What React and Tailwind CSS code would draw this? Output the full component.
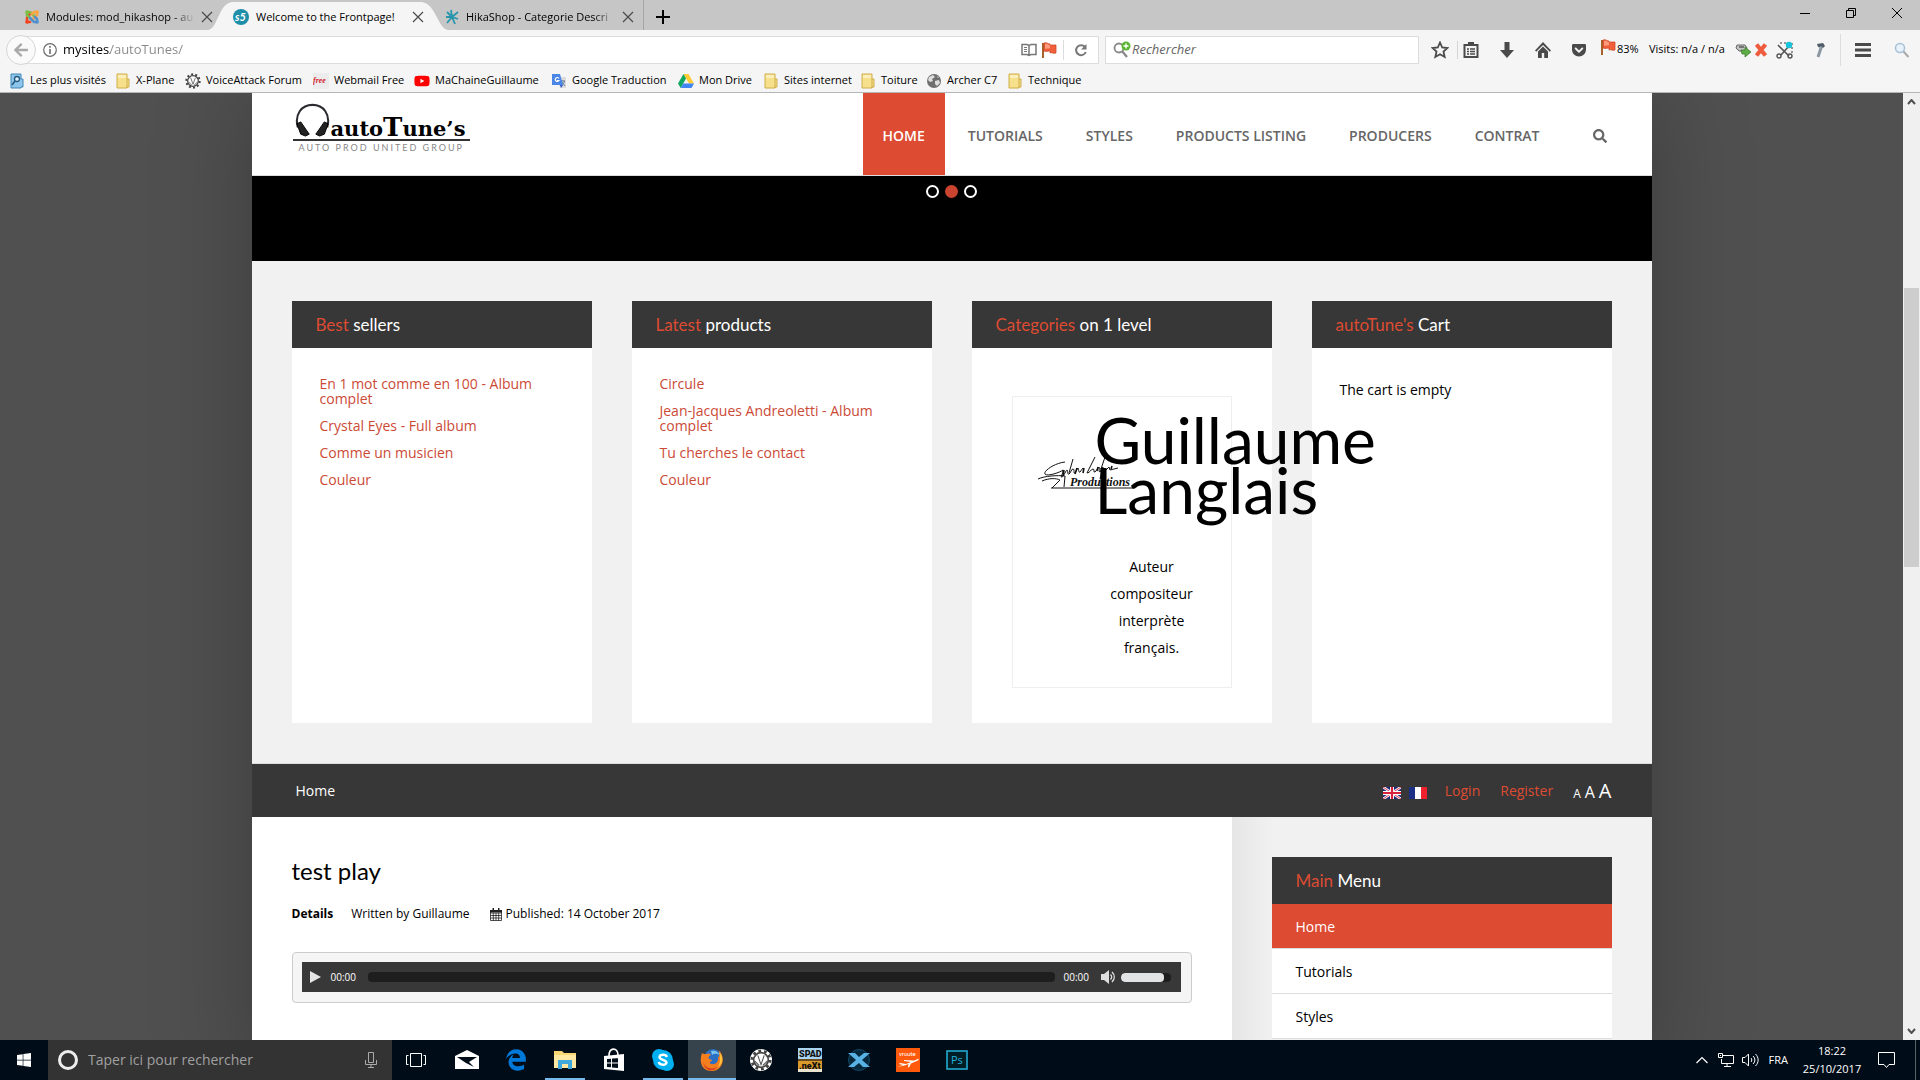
import React, { useState } from "react";
import { FaArrowLeft, FaEdgeLegacy, FaGetPocket, FaSearch, FaWindows, FaYoutube } from "react-icons/fa";

const folderIcon = (
  <svg viewBox="0 0 16 16" className="h-4 w-4">
    <path d="M2 1h10v5h2v8h-2v1H2z" fill="#f6e08b" stroke="#cfae4a" />
    <path d="M12 6v9" stroke="#cfae4a" />
    <path d="M3 2h8v3H3z" fill="#fbf0bd" />
  </svg>
);

const gearIcon = (
  <svg viewBox="0 0 24 24" className="h-full w-full">
    <circle cx="12" cy="12" r="10" fill="none" stroke="#444" strokeWidth="3" strokeDasharray="3 3.28" />
    <circle cx="12" cy="12" r="8" fill="#fff" stroke="#444" strokeWidth="1.800" />
    <path d="M8.500 7l3.500 10L15.500 7M5 13l5 5M19 13l-5 5" fill="none" stroke="#555" strokeWidth="1.200" />
  </svg>
);

function RedFlag() {
  return (
    <svg viewBox="0 0 16 16" className="h-4 w-4 shrink-0">
      <path d="M2 1v15" stroke="#a5622d" strokeWidth="2" />
      <path d="M3 1c3-1 4 1 6 1v1h6v8c-3 1-4-1-6 0V9c-2 0-4 1-6 0z" fill="#f0603c" stroke="#c9401f" strokeWidth=".7" />
      <path d="M4 2c2-1 3 1 5 1v3c-2 1-3 0-5 1z" fill="#ff9b7c" />
    </svg>
  );
}

const bookmarks = [
  {
    label: "Les plus visités",
    width: "w-[106px]",
    icon: (
      <svg viewBox="0 0 16 16" className="h-4 w-4">
        <path d="M2 1h10v5h2v8h-2v1H2z" fill="#8ec5ea" stroke="#3f87b8" />
        <circle cx="8" cy="6" r="2.5" fill="#d9effc" stroke="#24577d" strokeWidth="1.3" />
        <path d="M6 8l-3 4" stroke="#24577d" strokeWidth="1.6" />
      </svg>
    ),
  },
  { label: "X-Plane", width: "w-[70px]", icon: folderIcon },
  { label: "VoiceAttack Forum", width: "w-[128px]", icon: gearIcon },
  {
    label: "Webmail Free",
    width: "w-[101px]",
    icon: (
      <svg viewBox="0 0 16 16" className="h-4 w-4">
        <path d="M0 0h16v16H0z" fill="#ececec" />
        <text x="0" y="10" fontSize="8" fontStyle="italic" fontWeight="bold" fontFamily="Liberation Serif, serif" fill="#d3232e">free</text>
      </svg>
    ),
  },
  { label: "MaChaineGuillaume", width: "w-[137px]", icon: <FaYoutube className="h-4 w-4 text-[#f00]" /> },
  {
    label: "Google Traduction",
    width: "w-[127px]",
    icon: (
      <svg viewBox="0 0 16 16" className="h-4 w-4">
        <path d="M6 4h9v11H9z" fill="#dcdcdc" />
        <path d="M10 8h4M12 7v1M13.500 8c0 2-2 4-3 4M11 9l3 4" stroke="#6b7f93" fill="none" />
        <path d="M1 1h8l3 11H1z" fill="#4a86e8" />
        <path d="M8 5.500a2 2 0 1 0 0 2H6" fill="none" stroke="#fff" strokeWidth="1.200" />
        <path d="M9 12h3l-2 3z" fill="#2a56c6" />
      </svg>
    ),
  },
  {
    label: "Mon Drive",
    width: "w-[85px]",
    icon: (
      <svg viewBox="0 0 16 16" className="h-4 w-4">
        <path d="M5.500 1h5L16 10.500h-5z" fill="#fc3" />
        <path d="M5.500 1L8 5.500 2.700 15 0 10.500z" fill="#11a861" />
        <path d="M5.200 10.500H16L13.500 15H2.700z" fill="#4285f4" />
      </svg>
    ),
  },
  { label: "Sites internet", width: "w-[97px]", icon: folderIcon },
  { label: "Toiture", width: "w-[66px]", icon: folderIcon },
  {
    label: "Archer C7",
    width: "w-[81px]",
    icon: (
      <svg viewBox="0 0 16 16" className="h-4 w-4">
        <circle cx="8" cy="8" r="7" fill="#6f6f6f" />
        <path d="M3 4l4-2 2 2-3 2 1 2-3 1-2-2zM9 8l4-1 1 3-3 3-2-2zM11 3l2 1-1 1z" fill="#dedede" />
      </svg>
    ),
  },
  { label: "Technique", width: "w-[80px]", icon: folderIcon },
];

const nav = ["Home", "Tutorials", "Styles", "Products Listing", "Producers", "Contrat"];

function CloseX() {
  return (
    <svg viewBox="0 0 12 12" className="h-3 w-3">
      <path d="M1 1l10 10M11 1L1 11" stroke="#4a4a4a" strokeWidth="1.2" />
    </svg>
  );
}

function TabBar() {
  return (
    <div className="flex h-[30px] shrink-0 items-stretch bg-[#c6c6c6] text-[11px] text-black">
      <div className="flex w-[213px] items-center pt-1 pl-6">
        <svg viewBox="0 0 16 16" className="mr-[6px] h-4 w-4 shrink-0">
          <g fill="none" strokeWidth="2.600" strokeLinecap="round">
            <path d="M3 13V9c0-1 1-2 2-3l2-2M3 13h3" stroke="#f44321" />
            <path d="M3 3h2c2 0 3 2 5 4M3 3v3l3 3" stroke="#7ac143" />
            <path d="M13 3v3l-5 5M13 3h-3L8 5" stroke="#f9a541" />
            <path d="M13 13h-3l-4-4M13 13v-3l-2-2" stroke="#5091cd" />
          </g>
          <g fill="none" strokeWidth="3.600" strokeLinecap="round">
            <path d="M3 3h.1" stroke="#7ac143" />
            <path d="M13 3h.1" stroke="#f9a541" />
            <path d="M13 13h.1" stroke="#5091cd" />
            <path d="M3 13h.1" stroke="#f44321" />
          </g>
        </svg>
        <span className="w-[150px] whitespace-nowrap [mask-image:linear-gradient(to_right,#000_85%,transparent)]">
          Modules: mod_hikashop - au
        </span>
        <button aria-label="Close tab" className="ml-[6px]"><CloseX /></button>
      </div>
      <div className="relative flex w-[227px] items-center pt-1 pl-5">
        <svg viewBox="0 0 240 28" preserveAspectRatio="none" className="absolute bottom-0 -left-[5px] h-7 w-[240px]">
          <path d="M0 28C10 27 10 2 24 0H214C228 2 230 27 240 28z" fill="#f5f5f5" />
        </svg>
        <svg viewBox="0 0 16 16" className="relative mr-[7px] h-4 w-4 shrink-0">
          <circle cx="8" cy="8" r="8" fill="#1f8ea8" />
          <text x="2" y="12" fontSize="11" fontWeight="bold" fontStyle="italic" fontFamily="Lato, sans-serif" fill="#fff">s5</text>
        </svg>
        <span className="relative w-[150px] whitespace-nowrap">Welcome to the Frontpage!</span>
        <button aria-label="Close tab" className="relative ml-[6px]"><CloseX /></button>
      </div>
      <div className="flex w-[204px] items-center border-r border-[#a5a5a5] pt-1 pl-1">
        <svg viewBox="0 0 16 16" className="mr-[6px] h-4 w-4 shrink-0">
          <path d="M8 8L7 1M8 8l6-5M8 8H2M8 8l6 2M8 8l3 7M8 8l-5 6M8 8L3 3" stroke="#2796ad" strokeWidth="1.800" />
        </svg>
        <span className="w-[150px] whitespace-nowrap [mask-image:linear-gradient(to_right,#000_85%,transparent)]">
          HikaShop - Categorie Descri
        </span>
        <button aria-label="Close tab" className="ml-[6px]"><CloseX /></button>
      </div>
      <button aria-label="New tab" className="ml-3 pt-1">
        <svg viewBox="0 0 14 14" className="h-[14px] w-[14px]">
          <path d="M7 0v14M0 7h14" stroke="#000" strokeWidth="2" />
        </svg>
      </button>
      <div className="ml-auto flex items-center gap-9 pr-[18px] pb-1">
        <button aria-label="Minimize">
          <svg viewBox="0 0 10 10" className="h-[10px] w-[10px]"><path d="M0 5.500h10" stroke="#000" /></svg>
        </button>
        <button aria-label="Restore">
          <svg viewBox="0 0 10 10" className="h-[10px] w-[10px]">
            <path d="M.5 2.500h7v7h-7zM2.500 2.500v-2h7v7h-2" fill="none" stroke="#000" />
          </svg>
        </button>
        <button aria-label="Close">
          <svg viewBox="0 0 10 10" className="h-[10px] w-[10px]"><path d="M0 0l10 10M10 0L0 10" stroke="#000" /></svg>
        </button>
      </div>
    </div>
  );
}

function AddressBar() {
  return (
    <div className="flex h-[39px] shrink-0 items-center bg-[#f5f5f5] pr-[10px] pl-[6px]">
      <button aria-label="Back" className="relative z-10 flex h-[30px] w-[30px] items-center justify-center rounded-full border border-[#d5d5d5] bg-[#fafafa]">
        <FaArrowLeft className="h-4 w-4 text-[#a9a9a9]" />
      </button>
      <div className="-ml-3 flex h-7 flex-1 items-center border border-[#dcdcdc] bg-white pl-[18px]">
        <svg viewBox="0 0 14 14" className="h-[14px] w-[14px] shrink-0">
          <circle cx="7" cy="7" r="6.300" fill="none" stroke="#6c6c6c" strokeWidth="1.200" />
          <path d="M7 3v1.800M7 6v5" stroke="#6c6c6c" strokeWidth="1.600" />
        </svg>
        <input
          aria-label="Address"
          defaultValue="mysites/autoTunes/"
          className="ml-[6px] min-w-0 flex-1 bg-[linear-gradient(to_right,#000_47px,#888_47px)] bg-clip-text text-[13px] text-transparent outline-none"
        />
        <svg viewBox="0 0 16 14" className="h-[14px] w-4">
          <path d="M1 1.500h5l2 1 2-1h5v10h-5l-2 1-2-1H1zM8 3v9" fill="none" stroke="#777" strokeWidth="1.500" />
          <path d="M3 4.500h3M3 6.500h3M3 8.500h3" stroke="#777" />
        </svg>
        <span className="mr-[6px] ml-1"><RedFlag /></span>
        <button aria-label="Reload" className="flex h-5 w-[35px] items-center justify-center border-l border-[#ddd]">
          <svg viewBox="0 0 14 14" className="h-[14px] w-[14px]">
            <path d="M11 4a5 5 0 1 0 .8 5" fill="none" stroke="#777" strokeWidth="2" />
            <path d="M12.500 1v5.500H7z" fill="#777" />
          </svg>
        </button>
      </div>
      <div className="ml-[6px] flex h-7 w-[314px] items-center border border-[#dcdcdc] bg-white pl-[7px]">
        <svg viewBox="0 0 18 18" className="h-[18px] w-[18px] shrink-0">
          <circle cx="6" cy="7" r="4.500" fill="none" stroke="#888" strokeWidth="1.800" />
          <path d="M9 10l5 6" stroke="#888" strokeWidth="2.200" />
          <circle cx="13" cy="5" r="4.500" fill="#5cb531" />
          <path d="M13 2.500v5M10.500 5h5" stroke="#fff" strokeWidth="1.400" />
        </svg>
        <input aria-label="Rechercher" placeholder="Rechercher" className="ml-px min-w-0 flex-1 text-[13px] italic outline-none placeholder:text-[#666]" />
      </div>
      <div className="ml-3 flex items-center text-[#4a4a4a]">
        <button aria-label="Bookmark" className="flex w-[27px] justify-start border-r border-[#d5d5d5]">
          <svg viewBox="0 0 18 18" className="h-[18px] w-[18px]">
            <path d="M9 1.500l2.200 5 5.300.5-4 3.600 1.200 5.400L9 13.200 4.300 16l1.200-5.400-4-3.600 5.300-.5z" fill="none" stroke="#4a4a4a" strokeWidth="1.800" />
          </svg>
        </button>
        <button aria-label="Library" className="ml-[5px]">
          <svg viewBox="0 0 16 16" className="h-4 w-4">
            <path d="M1.500 3h13v12h-13z" fill="none" stroke="#4a4a4a" strokeWidth="2" />
            <path d="M5 0h6v4H5z" fill="#4a4a4a" />
            <path d="M4 7h2M7 7h5M4 9.500h2M7 9.500h5M4 12h2M7 12h5" stroke="#4a4a4a" strokeWidth="1.400" />
          </svg>
        </button>
        <button aria-label="Downloads" className="ml-5">
          <svg viewBox="0 0 16 16" className="h-4 w-4"><path d="M5.500 0h5v8H15l-7 8-7-8h4.500z" fill="#4a4a4a" /></svg>
        </button>
        <button aria-label="Home page" className="ml-5">
          <svg viewBox="0 0 16 16" className="h-4 w-4">
            <path d="M8 0L0 8.500l1.200 1.200L8 3l6.800 6.700L16 8.500z" fill="#4a4a4a" />
            <path d="M8 4.500L3 9.500V16h3.800v-5h2.400v5H13V9.500z" fill="#4a4a4a" />
          </svg>
        </button>
        <button aria-label="Pocket" className="ml-5"><FaGetPocket className="h-4 w-4" /></button>
        <span className="ml-[13px] w-[15px] pb-[6px]"><RedFlag /></span>
        <span className="w-[34px] pl-[2px] text-[11px] text-black">83%</span>
        <span className="w-[86px] text-[11px] whitespace-nowrap text-black">Visits: n/a / n/a</span>
        <svg viewBox="0 0 16 16" className="h-4 w-4">
          <path d="M2 3h8l2 3-2 3H4L1 6z" fill="#c4c4c4" stroke="#666" />
          <path d="M4 5h5" stroke="#555" strokeWidth="1.400" />
          <path d="M6 8h4V5l6 5-6 5v-3H7z" fill="#5fae45" stroke="#35732a" strokeWidth=".7" />
        </svg>
        <svg viewBox="0 0 14 14" className="ml-[3px] h-[14px] w-[14px]">
          <path d="M2.500 1.500l9 11M11.500 1.500l-9 11" stroke="#ee5b3d" strokeWidth="4.200" />
        </svg>
        <svg viewBox="0 0 18 18" className="ml-2 h-[18px] w-[18px]">
          <path d="M4 2h12v12" fill="none" stroke="#333" strokeDasharray="2 2" />
          <path d="M2 4l11 11M13 5L5 14" stroke="#555" strokeWidth="1.600" />
          <circle cx="3" cy="15" r="2" fill="none" stroke="#555" strokeWidth="1.400" />
          <circle cx="14" cy="15" r="2" fill="none" stroke="#555" strokeWidth="1.400" />
          <circle cx="13" cy="4" r="3.200" fill="#18c3dc" />
        </svg>
        <svg viewBox="0 0 16 16" className="ml-[18px] h-4 w-4">
          <path d="M5 2l6-1 2 3-2 2-5-1z" fill="#4f5b66" />
          <path d="M9.500 4.500L6 15" stroke="#8b97a3" strokeWidth="3" />
        </svg>
        <button aria-label="Menu" className="ml-3 flex h-8 w-11 items-center justify-center border-l border-[#ddd]">
          <svg viewBox="0 0 16 14" className="h-[14px] w-4">
            <path d="M0 1.500h16M0 7h16M0 12.500h16" stroke="#4a4a4a" strokeWidth="3" />
          </svg>
        </button>
        <svg viewBox="0 0 16 16" className="ml-[10px] h-4 w-4">
          <circle cx="6" cy="6" r="4.500" fill="#e6f2fc" stroke="#a9bfd4" strokeWidth="1.500" />
          <path d="M9.500 9.500l5 5.500" stroke="#a9a9a9" strokeWidth="2" />
        </svg>
      </div>
    </div>
  );
}

function BookmarksBar() {
  return (
    <div className="flex h-6 shrink-0 items-center border-b border-[#b6b6b6] bg-[#f5f5f5] pl-[9px]">
      {bookmarks.map((b) => (
        <a key={b.label} href="#" className={`flex shrink-0 items-center whitespace-nowrap text-[11px] text-black ${b.width}`}>
          <span className="mr-[5px] h-4 w-4 shrink-0">{b.icon}</span>
          {b.label}
        </a>
      ))}
    </div>
  );
}

function Logo() {
  return (
    <a href="#" className="ml-[41px] block w-[177px] pt-[10px] text-black">
      <div className="flex h-[38px] items-end border-b-2 border-[#333]">
        <svg viewBox="0 0 38 36" className="mb-[2px] ml-[2px] h-[34px] w-9 shrink-0">
          <path d="M3 26C-1 12 7 2 18.500 2S38 12 34 26" fill="none" stroke="#2b2b30" strokeWidth="2.200" />
          <path d="M2 22l4-2 9 13-4 2-5-2z" fill="#222" stroke="#000" />
          <path d="M35 22l-4-2-9 13 4 2 5-2z" fill="#222" stroke="#000" />
        </svg>
        <span className="font-['DejaVu_Serif',serif] text-[21px] leading-5 font-bold">
          auto<span className="text-[26px]">T</span>une’s
        </span>
      </div>
      <div className="pt-[2px] pl-[6px] font-['Lato',sans-serif] text-[9px] leading-[10px] tracking-[2px] whitespace-nowrap text-[#888]">
        AUTO PROD UNITED GROUP
      </div>
    </a>
  );
}

function SiteHeader() {
  return (
    <header className="flex h-[83px] items-stretch border-b border-[#ddd] bg-white">
      <Logo />
      <nav className="ml-auto flex items-stretch gap-[3px] text-sm font-semibold text-[#666] uppercase">
        {nav.map((item, i) => (
          <a
            key={item}
            href="#"
            className={`flex items-center px-5 pt-1 ${i === 0 ? "bg-[#dd4b32] text-white" : ""}`}
          >
            {item}
          </a>
        ))}
      </nav>
      <button aria-label="Search" className="mr-[45px] ml-[33px] pt-1 text-[#666]">
        <FaSearch className="h-[14px] w-[14px]" />
      </button>
    </header>
  );
}

function BoxTitle({ first, rest }) {
  return (
    <h3 className="h-[47px] bg-[#373737] pl-6 font-['Lato',sans-serif] text-[17px] leading-[48px] whitespace-nowrap text-white">
      <span className="text-[#dd4b32]">{first}</span> {rest}
    </h3>
  );
}

function Card({ first, rest, children }) {
  return (
    <section className="bg-white">
      <BoxTitle first={first} rest={rest} />
      <div className="p-7">{children}</div>
    </section>
  );
}

function LinkList({ items }) {
  return (
    <ul className="flex flex-col gap-3 text-sm leading-[15px] text-[#cb4a36]">
      {items.map((item) => (
        <li key={item}><a href="#">{item}</a></li>
      ))}
    </ul>
  );
}

function Signature() {
  return (
    <svg viewBox="0 0 98 34" className="absolute top-[58px] left-6 h-[34px] w-[98px]">
      <g fill="none" stroke="#111" strokeWidth="1">
        <path d="M28 7C18 8 6 16 8 19s16-2 18-4c0 4-3 8-1 7s4-7 5-7 0 5 2 4 2-5 4-5 0 5 2 4l3-5c1 0 0 5 2 4l3-4M36 4l-4 14M58 2l-8 16c3 0 4-4 6-4s0 4 2 3l4-5c1 1-1 5 1 5l3-5-3 12M68 2l-4 12 5 1 3-3 1 3 8-2" />
        <path d="M27 15l-1 6M40 13l-2 6M47 13l-1 5M61 12l-1 4M75 11l-1 3" strokeWidth="1.600" />
        <path d="M1 24c6-3 20-4 27-3l-1 11M5 26c7-3 14-3 18-1l-8 8M14 33h82" />
      </g>
      <text x="33" y="31" fontSize="12" fontStyle="italic" fontWeight="bold" fontFamily="Liberation Serif, serif" fill="#111">Productions</text>
    </svg>
  );
}

function UnionJack() {
  return (
    <svg viewBox="0 0 18 12" className="h-3 w-[18px]">
      <path d="M0 0h18v12H0z" fill="#1f2c7a" />
      <path d="M0 0l18 12M18 0L0 12" stroke="#fff" strokeWidth="2.600" />
      <path d="M0 0l18 12M18 0L0 12" stroke="#d8213b" strokeWidth=".9" />
      <path d="M9 0v12M0 6h18" stroke="#fff" strokeWidth="4" />
      <path d="M9 0v12M0 6h18" stroke="#d8213b" strokeWidth="2.200" />
    </svg>
  );
}

function FrenchFlag() {
  return (
    <svg viewBox="0 0 18 12" className="h-3 w-[18px]">
      <path d="M0 0h6v12H0z" fill="#1c2f86" />
      <path d="M6 0h6v12H6z" fill="#fff" />
      <path d="M12 0h6v12h-6z" fill="#f0212e" />
    </svg>
  );
}

function Breadcrumbs() {
  return (
    <div className="flex h-[54px] items-center border-t border-[#ddd] bg-[#373737] pr-10 pl-11 text-sm text-white">
      <a href="#">Home</a>
      <a href="#" aria-label="English" className="mt-1 ml-auto"><UnionJack /></a>
      <a href="#" aria-label="Français" className="mt-1 ml-2"><FrenchFlag /></a>
      <a href="#" className="ml-[18px] text-[#dd4b32]">Login</a>
      <a href="#" className="ml-5 text-[#dd4b32]">Register</a>
      <div className="ml-5 flex items-baseline gap-1">
        <button className="text-xs">A</button>
        <button className="text-base">A</button>
        <button className="text-xl">A</button>
      </div>
    </div>
  );
}

function Player() {
  const [volume, setVolume] = useState(86);

  return (
    <div className="mt-7 rounded border border-[#ccc] bg-[#f5f5f5] p-[9px] pr-[10px] pb-[10px]">
      <div className="flex h-[30px] items-center bg-[#383838] pr-[10px] pl-2 text-[10px] text-white">
        <button aria-label="Play">
          <svg viewBox="0 0 11 12" className="h-3 w-[11px]"><path d="M0 0l11 6-11 6z" fill="#e6e6e6" /></svg>
        </button>
        <span className="ml-[10px] w-[27px]">00:00</span>
        <input
          type="range"
          aria-label="Position"
          defaultValue={0}
          className="ml-[10px] h-[10px] min-w-0 flex-1 appearance-none rounded-sm bg-[#1e1e1e] [&::-webkit-slider-thumb]:opacity-0"
        />
        <span className="ml-[9px] w-[27px]">00:00</span>
        <svg viewBox="0 0 14 14" className="ml-[10px] h-[14px] w-[14px]">
          <path d="M0 4h3l5-4v14l-5-4H0z" fill="#e0e0e0" />
          <path d="M9.500 4.500c1.500 1.500 1.500 3.500 0 5M11 2c3 3 3 7 0 10" fill="none" stroke="#e0e0e0" strokeWidth="1.400" />
        </svg>
        <div className="relative ml-[6px] h-[9px] w-[50px] overflow-hidden rounded-sm bg-[#1e1e1e]">
          <div className="h-full rounded-sm bg-[#e1e3e4]" style={{ width: `${volume}%` }} />
          <input
            type="range"
            aria-label="Volume"
            value={volume}
            onChange={(e) => setVolume(Number(e.target.value))}
            className="absolute inset-0 h-full w-full opacity-0"
          />
        </div>
      </div>
    </div>
  );
}

function Article() {
  return (
    <main className="w-[70%] bg-white px-10 pt-[38px]">
      <h2 className="font-['Lato',sans-serif] text-2xl leading-8 text-black">test play</h2>
      <div className="mt-[17px] flex items-center text-xs leading-5 text-black">
        <b>Details</b>
        <span className="ml-[18px]">Written by Guillaume</span>
        <svg viewBox="0 0 12 13" className="mr-1 ml-5 h-[13px] w-3">
          <path d="M.5 2.500h11v10H.5zM.5 5h11M.5 7.500h11M.5 10h11M3.300 5v7.500M6 5v7.500M8.700 5v7.500" fill="none" stroke="#222" strokeWidth=".8" />
          <path d="M0 2h12v2.500H0zM2.500 0h1.500v3H2.500zM8 0h1.500v3H8z" fill="#222" />
        </svg>
        <span>Published: 14 October 2017</span>
      </div>
      <Player />
    </main>
  );
}

function Sidebar() {
  return (
    <aside className="w-[30%] bg-[#f1f1f1] bg-[linear-gradient(to_right,#e6e6e6,#f1f1f1_40px)] p-10">
      <BoxTitle first="Main" rest="Menu" />
      <ul className="text-sm text-black">
        {["Home", "Tutorials", "Styles"].map((item, i) => (
          <li key={item} className={`border-b border-[#ddd] ${i === 0 ? "bg-[#dd4b32] text-white" : "bg-white"}`}>
            <a href="#" className="block h-11 pl-6 leading-[46px]">{item}</a>
          </li>
        ))}
      </ul>
    </aside>
  );
}

function Scrollbar() {
  return (
    <div className="flex w-[17px] shrink-0 flex-col items-center justify-between bg-[#f0f0f0] py-[6px]">
      <svg viewBox="0 0 9 6" className="h-[6px] w-[9px]"><path d="M1 5l3.500-4L8 5" fill="none" stroke="#505050" strokeWidth="2" /></svg>
      <div className="mb-[278px] h-[279px] w-[15px] bg-[#cdcdcd]" />
      <svg viewBox="0 0 9 6" className="h-[6px] w-[9px]"><path d="M1 1l3.500 4L8 1" fill="none" stroke="#505050" strokeWidth="2" /></svg>
    </div>
  );
}

function Website() {
  return (
    <div className="flex min-h-0 flex-1">
      <div className="flex-1 overflow-hidden bg-[#505050]">
        <div className="mx-auto max-w-[1400px] shadow-[0_0_90px_rgba(0,0,0,0.25)]">
          <SiteHeader />
          <div className="flex h-[85px] justify-center gap-[6px] bg-black pt-[9px]">
            <button aria-label="Slide 1" className="h-[13px] w-[13px] rounded-full border-2 border-white" />
            <button aria-label="Slide 2" className="h-[13px] w-[13px] rounded-full bg-[#cb4430]" />
            <button aria-label="Slide 3" className="h-[13px] w-[13px] rounded-full border-2 border-white" />
          </div>
          <div className="grid grid-cols-4 gap-10 bg-[#f1f1f1] p-10">
            <Card first="Best" rest="sellers">
              <LinkList items={["En 1 mot comme en 100 - Album complet", "Crystal Eyes - Full album", "Comme un musicien", "Couleur"]} />
            </Card>
            <Card first="Latest" rest="products">
              <LinkList items={["Circule", "Jean-Jacques Andreoletti - Album complet", "Tu cherches le contact", "Couleur"]} />
            </Card>
            <section className="relative z-10 bg-white">
              <BoxTitle first="Categories" rest="on 1 level" />
              <div className="px-10 pt-12 pb-[35px]">
                <div className="relative border border-[#eee] pt-[18px] pr-[22px] pb-[26px] pl-[82px] text-black">
                  <Signature />
                  <h1 className="relative w-0 font-['Lato',sans-serif] text-[64px] leading-[50px]">Guillaume Langlais</h1>
                  <p className="mt-[38px] text-center text-sm leading-[27px]">Auteur compositeur interprète français.</p>
                </div>
              </div>
            </section>
            <Card first="autoTune's" rest="Cart">
              <p className="text-sm leading-[27px] text-black">The cart is empty</p>
            </Card>
          </div>
          <Breadcrumbs />
          <div className="flex">
            <Article />
            <Sidebar />
          </div>
        </div>
      </div>
      <Scrollbar />
    </div>
  );
}

const apps = [
  {
    name: "Mail",
    icon: (
      <svg viewBox="0 0 24 24" className="h-6 w-6">
        <path d="M0 8l12-6 12 6v13H0z" fill="#fff" />
        <path d="M2 9h20l-8 5 5 5-8-4z" fill="#000c17" />
      </svg>
    ),
  },
  { name: "Edge", icon: <FaEdgeLegacy className="h-[22px] w-[22px] text-[#0078d7]" /> },
  {
    name: "Explorer",
    state: "w-10 bg-[#76b9ed]",
    icon: (
      <svg viewBox="0 0 22 20" className="h-5 w-[22px]">
        <path d="M0 1h8l2 2h12v15H0z" fill="#f7d673" />
        <path d="M0 5h22v13H0z" fill="#ffe9a2" />
        <path d="M4 19v-9h14v9h-4v-5H8v5z" fill="#3fa9dd" />
      </svg>
    ),
  },
  {
    name: "Store",
    icon: (
      <svg viewBox="0 0 22 24" className="h-6 w-[22px]">
        <path d="M1 8l20-2v17L1 21z" fill="#fff" />
        <path d="M6 8c0-9 9-9 9-1" fill="none" stroke="#fff" strokeWidth="1.600" />
        <path d="M4 11l4-.3v3.800H4zM9 10.600l6-.4v4.300H9zM4 15.500h4v3.800L4 19zM9 15.500h6v4.400l-6-.5z" fill="#000c17" />
      </svg>
    ),
  },
  {
    name: "Skype",
    state: "w-10 bg-[#76b9ed]",
    icon: (
      <svg viewBox="0 0 24 24" className="h-6 w-6">
        <circle cx="8" cy="8" r="7" fill="#00aff0" />
        <circle cx="16" cy="16" r="7" fill="#00aff0" />
        <circle cx="12" cy="12" r="10" fill="#00aff0" />
        <path d="M16 9c-1-3-7-3-7.500 0s7 2.500 7 5.500-7 3-7.800-.5" fill="none" stroke="#fff" strokeWidth="2.400" />
      </svg>
    ),
  },
  {
    name: "Firefox",
    active: true,
    state: "w-12 bg-[#76b9ed]",
    icon: (
      <svg viewBox="0 0 24 24" className="h-6 w-6">
        <circle cx="13" cy="10" r="9" fill="#2a6fc4" />
        <path d="M11 3c4-1 8 1 8 4-3-2-5-1-7 0z" fill="#79c4ef" />
        <path d="M2 5c1 1 3 1 5 1 2-1 3 0 4 1-2 1-3 2-2 4 2 0 3 1 3 2-2 0-3 2-1 3 5 1 8-3 7-7 2 0 2-5 0-7 8 5 6 21-6 21C1 23-1 13 2 5z" fill="#f57f1f" />
        <path d="M19 4c5 5 4 12-1 15 2-4 3-9 1-15z" fill="#ffc43b" />
        <path d="M3 14c2 6 9 8 14 5-3 5-12 5-14-5z" fill="#d8401f" />
      </svg>
    ),
  },
  { name: "VoiceAttack", icon: <span className="block h-[22px] w-[22px] overflow-hidden rounded-full bg-white">{gearIcon}</span> },
  {
    name: "SPAD.neXt",
    icon: (
      <svg viewBox="0 0 24 24" className="h-6 w-6">
        <path d="M0 0h24v12H0z" fill="#a9d5f2" />
        <path d="M0 11h24v3H0z" fill="#6b4a1d" />
        <path d="M0 13h24v8H0z" fill="#d99a2b" />
        <path d="M0 21h24v3H0z" fill="#e9e3cf" />
        <g fontFamily="Roboto, sans-serif" fontWeight="900" fontSize="9" fill="#111">
          <text x="1" y="9">SPAD</text>
          <text x="1" y="21">.neXt</text>
        </g>
      </svg>
    ),
  },
  {
    name: "X-Plane",
    icon: (
      <svg viewBox="0 0 24 24" className="h-6 w-6">
        <circle cx="12" cy="12" r="10.500" fill="#06283d" stroke="#124866" />
        <path d="M1 5h7l4 4 5-4h6l-8 7 8 7h-7l-4-4-5 4H1l8-7z" fill="#58b2e4" />
      </svg>
    ),
  },
  {
    name: "vroute",
    icon: (
      <svg viewBox="0 0 24 24" className="h-6 w-6">
        <path d="M0 0h24v24H0z" fill="#ff5a0c" />
        <text x="3" y="8" fontSize="6" fontFamily="Roboto, sans-serif" fill="#fff">vroute</text>
        <path d="M1 19l6-2-4-1 1-1 6 1 5-2-7-1v-1l10 .5 5-2-1 2-7 3-2 4-1-.5.5-3-4 1.500z" fill="#fff" />
      </svg>
    ),
  },
  {
    name: "Photoshop",
    icon: (
      <svg viewBox="0 0 22 20" className="h-5 w-[22px]">
        <path d="M1 1h20v18H1z" fill="#001d26" stroke="#25b3dc" strokeWidth="1.500" />
        <text x="5" y="14" fontSize="11" fontFamily="Open Sans, sans-serif" fill="#25b3dc">Ps</text>
      </svg>
    ),
  },
];

function Taskbar() {
  return (
    <footer className="flex h-10 shrink-0 items-stretch bg-[#000c17] text-white">
      <button aria-label="Start" className="flex w-12 items-center justify-center"><FaWindows className="h-4 w-4" /></button>
      <div className="flex w-[344px] items-center bg-[#333] pl-[10px]">
        <span className="h-5 w-5 shrink-0 rounded-full border-[3px] border-[#eee]" />
        <input aria-label="Taper ici pour rechercher" placeholder="Taper ici pour rechercher" className="ml-[10px] w-[270px] text-sm outline-none placeholder:text-[#a0a0a0]" />
        <svg viewBox="0 0 12 16" className="ml-[7px] h-4 w-3">
          <path d="M3.500.5h5v10h-5zM.5 8v4.500h11V8M6 12.500v3M3 15.500h6" fill="none" stroke="#aaa" />
        </svg>
      </div>
      <button aria-label="Task view" className="flex w-12 items-center justify-center">
        <svg viewBox="0 0 20 14" className="h-[14px] w-5">
          <path d="M4.500.5h11v13h-11zM2.500 2.500H.5v9h2M17.500 2.500h2v9h-2" fill="none" stroke="#fff" />
        </svg>
      </button>
      <div className="ml-[3px] flex gap-px">
        {apps.map((app) => (
          <button
            key={app.name}
            aria-label={app.name}
            className={`relative flex w-12 items-center justify-center ${app.active ? "bg-[#36424c]" : ""}`}
          >
            {app.icon}
            {app.state && <span className={`absolute bottom-0 h-[2px] ${app.state}`} />}
          </button>
        ))}
      </div>
      <div className="ml-auto flex items-center text-[11px]">
        <svg viewBox="0 0 12 8" className="h-2 w-3"><path d="M.5 7L6 1.500 11.500 7" fill="none" stroke="#fff" strokeWidth="1.200" /></svg>
        <svg viewBox="0 0 16 14" className="ml-[10px] h-[14px] w-4">
          <path d="M5 2.500h10.500v8H3.500V6M9 10.500v3M6 13.500h7M.5.500h4v4h-4zM2 2.500h1" fill="none" stroke="#fff" />
        </svg>
        <svg viewBox="0 0 17 14" className="ml-2 h-[14px] w-[17px]">
          <path d="M.5 4.500h2.500L6.500 1v12L3 9.500H.5zM9 5c1 1 1 3 0 4M11 3c2.500 2.500 2.500 5.500 0 8M13.500 1c3.500 3.500 3.500 8.500 0 12" fill="none" stroke="#fff" />
        </svg>
        <span className="ml-[10px]">FRA</span>
        <div className="ml-[14px] w-[60px] text-center leading-[18px]">
          <div>18:22</div>
          <div>25/10/2017</div>
        </div>
        <svg viewBox="0 0 17 17" className="ml-4 h-[17px] w-[17px]">
          <path d="M.5.500h16v12H11L8.500 15.500 6 12.500H.5z" fill="none" stroke="#fff" />
        </svg>
        <span className="mr-1 ml-5 h-10 w-px bg-[#5a6268]" />
      </div>
    </footer>
  );
}

function App() {
  return (
    <div className="flex h-screen flex-col overflow-hidden font-['Open_Sans',sans-serif]">
      <TabBar />
      <AddressBar />
      <BookmarksBar />
      <Website />
      <Taskbar />
    </div>
  );
}

export default App;
